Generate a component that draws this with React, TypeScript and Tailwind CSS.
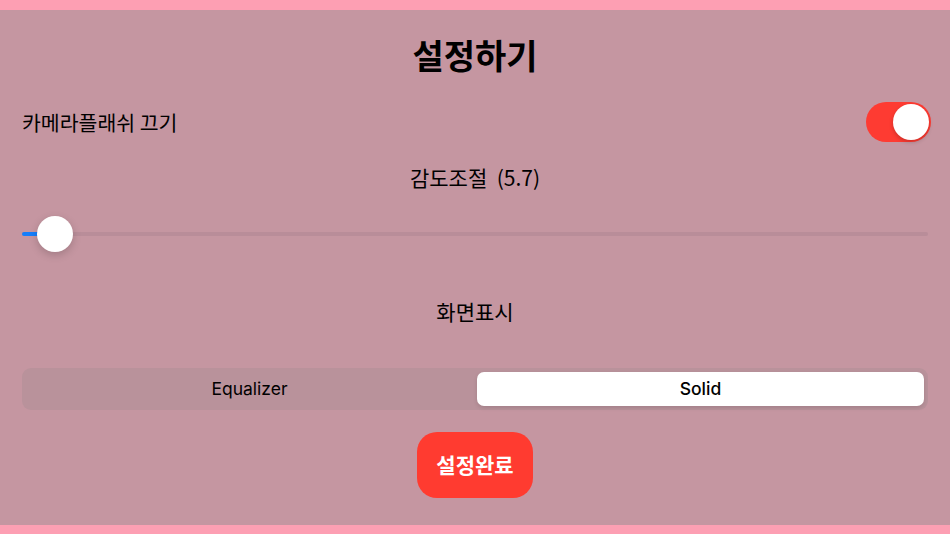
const ko = { fontFamily: '"Noto Sans CJK KR", "Noto Sans", sans-serif' };
const latin = { fontFamily: 'Inter, "Noto Sans", sans-serif' };

function Toggle({ on }: { on: boolean }) {
  return (
    <div
      className={`w-[65px] h-[40px] rounded-full p-[2px] flex items-center ${
        on ? "bg-[#fe3b32] justify-end" : "bg-[#b9929b] justify-start"
      }`}
    >
      <div className="w-[36px] h-[36px] rounded-full bg-white shadow-[0_2px_4px_rgba(0,0,0,0.2)]" />
    </div>
  );
}

function Slider({ value, max }: { value: number; max: number }) {
  const pct = (value / max) * 100;
  return (
    <div className="relative h-[36px] flex items-center">
      <div className="w-full h-[4px] rounded-full bg-[#b98d99]" />
      <div
        className="absolute left-0 h-[4px] rounded-full bg-[#157efb]"
        style={{ width: `${pct}%` }}
      />
      <div
        className="absolute w-[36px] h-[36px] -ml-[18px] rounded-full bg-white shadow-[0_3px_8px_rgba(0,0,0,0.18)]"
        style={{ left: `${pct}%` }}
      />
    </div>
  );
}

export default function App() {
  return (
    <div className="w-[950px] h-[534px] flex flex-col bg-[#c596a1] overflow-hidden">
      <div className="h-[10px] bg-[#fd9fb3]" />

      <div className="flex-1 flex flex-col px-[22px]">
        <h1
          className="mt-[25px] text-center text-[34px] leading-[40px] font-bold text-black"
          style={ko}
        >
          설정하기
        </h1>

        <div className="mt-[27px] flex items-center justify-between h-[40px] -mr-[3px]">
          <span className="text-[20.5px] text-black" style={ko}>
            카메라플래쉬 끄기
          </span>
          <Toggle on />
        </div>

        <div
          className="mt-[20px] text-center text-[21px] leading-[30px] text-black"
          style={ko}
        >
          감도조절&nbsp;&nbsp;(5.7)
        </div>

        <div className="mt-[24px]">
          <Slider value={0.34} max={9.4} />
        </div>

        <div
          className="mt-[44px] text-center text-[21px] leading-[30px] text-black"
          style={ko}
        >
          화면표시
        </div>

        <div className="mt-[42px] h-[42px] rounded-[9px] bg-[#b9929b] p-[4px] grid grid-cols-2 gap-[4px]">
          <button className="rounded-[7px] text-[17.5px] text-black pt-[1px]" style={latin}>
            Equalizer
          </button>
          <button
            className="rounded-[7px] bg-white text-[17.5px] font-medium text-black pt-[1px] shadow-[0_2px_4px_rgba(0,0,0,0.12)]"
            style={latin}
          >
            Solid
          </button>
        </div>

        <div className="mt-[22px] flex justify-center">
          <button
            className="w-[116px] h-[66px] rounded-[20px] bg-[#ff3b30] text-white text-[21px] font-bold"
            style={ko}
          >
            설정완료
          </button>
        </div>
      </div>

      <div className="h-[9px] bg-[#fd9fb3]" />
    </div>
  );
}
